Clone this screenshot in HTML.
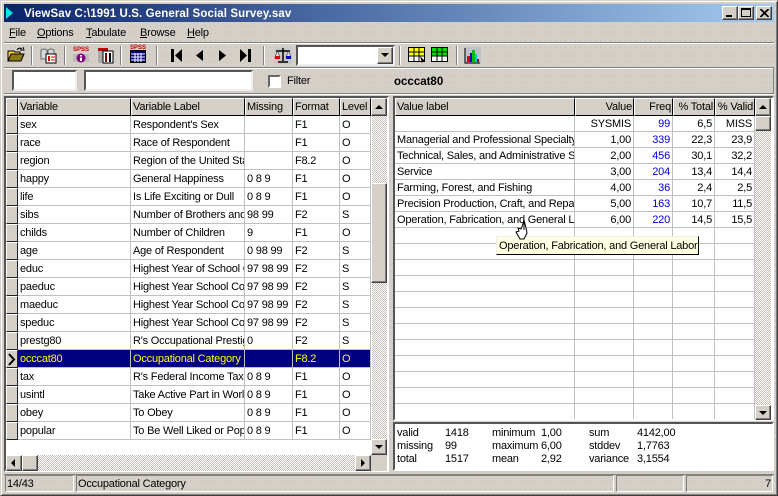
<!DOCTYPE html>
<html><head><meta charset="utf-8"><style>
*{box-sizing:border-box}
html,body{margin:0;padding:0}
body{width:778px;height:496px;overflow:hidden;position:relative;background-color:#d4d0c8;background-image:radial-gradient(circle,#e3c9bd 0.6px,transparent 0.8px),radial-gradient(circle,#bdbdc4 0.6px,transparent 0.8px);background-size:7px 5px,5px 7px;background-position:0 0,3px 2px;font-family:"Liberation Sans",sans-serif;font-size:11px;letter-spacing:-.2px;color:#000}
.a{position:absolute}
.t{position:absolute;white-space:nowrap;line-height:16px}
.r{position:absolute;background:#d4d0c8;border:1px solid;border-color:#fff #404040 #404040 #fff;box-shadow:inset -1px -1px 0 #808080}
.s{position:absolute;background:#fff;border:2px solid;border-color:#555 #eee #eee #555}
.sep{position:absolute;top:46px;width:2px;height:19px;border-left:1px solid #808080;border-right:1px solid #fff}
.chk{position:absolute;left:372px;width:15px;background:repeating-conic-gradient(#fff 0 25%,#c4c0b8 0 50%) 0 0/2px 2px}
table{position:absolute;border-collapse:separate;border-spacing:0;table-layout:fixed;background:#fff}
td{padding:1px 0 0 2px;overflow:hidden;white-space:nowrap;border-right:1px solid #c0c0c0;border-bottom:1px solid #c0c0c0;background:#fff}
.l td{height:18px}
.v td{height:16px}
.v td.n{text-align:right;padding:1px 2px 0 0}
.b{color:#0000d8}
td.i{padding:0;background:#d4d0c8;border:1px solid;border-color:#fff #202020 #202020 #fff}
tr.h td{background:#000080;color:#ff0}
tr.h td.i{background:#d4d0c8;color:#000}
.hd{position:absolute;top:98px;height:18px;background:#d4d0c8;border:1px solid;border-color:#fff #000 #000 #fff;line-height:17px;padding:0 1px;white-space:nowrap;overflow:hidden}
.arr{position:absolute;width:0;height:0;border-style:solid;border-color:transparent}
u{text-decoration:underline}
</style></head><body>
<!-- window frame -->
<div class="a" style="left:0;top:0;width:778px;height:496px;border:1px solid;border-color:#d4d0c8 #404040 #404040 #d4d0c8;box-shadow:inset 1px 1px 0 #fff,inset -1px -1px 0 #808080"></div>
<!-- title -->
<div class="a" style="left:4px;top:4px;width:770px;height:18px;background:linear-gradient(90deg,#0a246a,#a6caf0)"></div>
<div class="arr" style="left:6px;top:7px;border-width:6.5px 0 6.5px 7px;border-left-color:#00e8e8"></div>
<div class="t" style="left:24px;top:6px;color:#fff;font-weight:bold;font-size:11.5px;letter-spacing:.11px">ViewSav C:\1991 U.S. General Social Survey.sav</div>
<div class="r" style="left:722px;top:6px;width:16px;height:14px"><div class="a" style="left:3px;top:8px;width:6px;height:2px;background:#000"></div></div>
<div class="r" style="left:738px;top:6px;width:16px;height:14px"><div class="a" style="left:2px;top:1px;width:10px;height:9px;border:1px solid #000;border-top-width:2px"></div></div>
<div class="r" style="left:756px;top:6px;width:16px;height:14px"><svg class="a" style="left:3px;top:2px" width="9" height="8"><path d="M0 0L8 8M1 0L9 8M8 0L0 8M9 0L1 8" stroke="#000"/></svg></div>
<!-- menu -->
<div class="t" style="left:9px;top:25px"><u>F</u>ile</div>
<div class="t" style="left:37px;top:25px"><u>O</u>ptions</div>
<div class="t" style="left:86px;top:25px"><u>T</u>abulate</div>
<div class="t" style="left:140px;top:25px"><u>B</u>rowse</div>
<div class="t" style="left:187px;top:25px"><u>H</u>elp</div>
<div class="a" style="left:4px;top:42px;width:770px;height:2px;border-top:1px solid #808080;border-bottom:1px solid #fff"></div>
<!-- toolbar -->
<svg class="a" style="left:7px;top:46px" width="18" height="17"><path d="M1 5h6l1 1h5v3H4L1 15z" fill="#ffd24a" stroke="#000"/><path d="M1 15L4 8h13l-3 7z" fill="#8a7a10" stroke="#000"/><path d="M10 4q2-3 5-1" fill="none" stroke="#000"/><path d="M13 4h4l-1-3" fill="none" stroke="#000"/></svg>
<div class="sep" style="left:31px"></div>
<svg class="a" style="left:40px;top:47px" width="17" height="17"><path d="M1 3q3-2 6 0v9H1zM8 3q3-2 6 0v4H8z" fill="#d8d8d8" stroke="#666"/><rect x="6" y="7" width="10" height="9" fill="#fff" stroke="#000"/><rect x="8" y="9" width="2" height="5" fill="#e00000"/><path d="M11 10h4M11 13h4" stroke="#e00000"/></svg>
<div class="sep" style="left:64px"></div>
<div class="a" style="left:73px;top:54px;width:16px;height:8px;background:#bbb"></div>
<div class="t" style="left:73px;top:47px;font-size:6px;color:#c00000;line-height:7px;font-weight:bold;letter-spacing:0">SPSS</div>
<svg class="a" style="left:75px;top:53px" width="12" height="10"><circle cx="6" cy="5" r="4.5" fill="#800080"/><rect x="5" y="2" width="2" height="1.5" fill="#fff"/><rect x="5" y="4.5" width="2" height="3.5" fill="#fff"/></svg>
<svg class="a" style="left:97px;top:47px" width="17" height="17"><rect x="1" y="4" width="15" height="12" fill="#aaa"/><rect x="1" y="1" width="10" height="3" fill="#c00000"/><rect x="6" y="4" width="10" height="12" fill="#fff" stroke="#000"/><rect x="8" y="6" width="2" height="9" fill="#800000"/><rect x="12" y="6" width="2" height="9" fill="#000"/></svg>
<div class="sep" style="left:120px"></div>
<div class="t" style="left:130px;top:45px;font-size:6px;color:#c00000;line-height:7px;font-weight:bold;letter-spacing:0">SPSS</div>
<svg class="a" style="left:130px;top:50px" width="16" height="13"><rect x=".5" y=".5" width="15" height="12" fill="#000080" stroke="#000"/><path d="M1 4h14M1 7h14M1 10h14M5 3v9M8 3v9M11 3v9" stroke="#fff"/></svg>
<div class="sep" style="left:156px"></div>
<svg class="a" style="left:170px;top:48px" width="82" height="15" fill="#000"><rect x="1" y="1" width="3" height="13"/><path d="M5 7.5L12 1v13zM26 7.5L33 2v11zM49 2l7 5.5L49 13zM70 1l7 6.5L70 14z"/><rect x="78" y="1" width="3" height="13"/></svg>
<div class="sep" style="left:263px"></div>
<svg class="a" style="left:274px;top:47px" width="18" height="17"><rect x="0" y="0" width="18" height="17" fill="#c8c8c8"/><path d="M9 1v13M4 15h10M2 4h14" stroke="#000" stroke-width="1.5" fill="none"/><path d="M1 10L3.500 4L6 10zM12 10l2.500-6L17 10z" fill="#ddd" stroke="#444" stroke-width=".6"/><rect x="1" y="9" width="5" height="3" fill="#e00000"/><rect x="12" y="9" width="5" height="3" fill="#0000d0"/></svg>
<div class="s" style="left:296px;top:45px;width:99px;height:21px"></div>
<div class="r" style="left:377px;top:47px;width:16px;height:17px"><div class="arr" style="left:3px;top:5px;border-width:4px 4px 0;border-top-color:#000"></div></div>
<div class="sep" style="left:399px"></div>
<svg class="a" style="left:408px;top:47px" width="18" height="16"><rect x=".5" y=".5" width="16" height="14" fill="#fff" stroke="#000"/><rect x="1" y="1" width="15" height="8" fill="#ff0"/><path d="M1 5h15M1 9h15M6 1v14M11 1v14" stroke="#000"/><path d="M12 9l5 5-2 0-1 2z" fill="#000"/></svg>
<svg class="a" style="left:431px;top:47px" width="18" height="16"><rect x=".5" y=".5" width="16" height="14" fill="#fff" stroke="#000"/><rect x="1" y="1" width="15" height="8" fill="#00e000"/><path d="M1 5h15M1 9h15M6 1v14M11 1v14" stroke="#000"/></svg>
<div class="sep" style="left:456px"></div>
<svg class="a" style="left:464px;top:47px" width="17" height="17"><rect width="17" height="17" fill="#c0c0c8"/><rect x="3" y="9" width="3" height="6" fill="#e00000"/><rect x="6" y="6" width="2" height="9" fill="#0000d0"/><rect x="8" y="3" width="3" height="12" fill="#00c000"/><rect x="11" y="7" width="2" height="8" fill="#00c8c8"/><rect x="13" y="12" width="2" height="3" fill="#800000"/><path d="M1 1v15h15" stroke="#000" fill="none"/></svg>
<div class="a" style="left:4px;top:67px;width:770px;height:2px;border-top:1px solid #808080;border-bottom:1px solid #fff"></div>
<!-- filter panel -->
<div class="a" style="left:4px;top:67px;width:770px;height:27px;border-right:1px solid #808080;border-bottom:1px solid #808080;box-shadow:0 1px 0 #fff"></div>
<div class="s" style="left:12px;top:70px;width:65px;height:21px"></div>
<div class="s" style="left:84px;top:70px;width:169px;height:21px"></div>
<div class="s" style="left:268px;top:75px;width:13px;height:13px;border-color:#666 #fff #fff #666"></div>
<div class="t" style="left:287px;top:73px">Filter</div>
<div class="t" style="left:394px;top:74px;font-weight:bold;font-size:11.5px;letter-spacing:0">occcat80</div>
<!-- left grid -->
<div class="a" style="left:4px;top:96px;width:385px;height:376px;border:2px solid;border-color:#555 #fff #fff #555;background:#fff"></div>
<div class="hd" style="left:6px;width:12px"></div>
<div class="hd" style="left:18px;width:113px">Variable</div>
<div class="hd" style="left:131px;width:114px">Variable Label</div>
<div class="hd" style="left:245px;width:48px">Missing</div>
<div class="hd" style="left:293px;width:47px">Format</div>
<div class="hd" style="left:340px;width:31px">Level</div>
<table class="l" style="left:6px;top:116px;width:365px">
<colgroup><col style="width:12px"><col style="width:113px"><col style="width:114px"><col style="width:48px"><col style="width:47px"><col style="width:31px"></colgroup>
<tr><td class="i"></td><td>sex</td><td>Respondent's Sex</td><td></td><td>F1</td><td>O</td></tr>
<tr><td class="i"></td><td>race</td><td>Race of Respondent</td><td></td><td>F1</td><td>O</td></tr>
<tr><td class="i"></td><td>region</td><td>Region of the United States</td><td></td><td>F8.2</td><td>O</td></tr>
<tr><td class="i"></td><td>happy</td><td>General Happiness</td><td>0 8 9</td><td>F1</td><td>O</td></tr>
<tr><td class="i"></td><td>life</td><td>Is Life Exciting or Dull</td><td>0 8 9</td><td>F1</td><td>O</td></tr>
<tr><td class="i"></td><td>sibs</td><td>Number of Brothers and Sisters</td><td>98 99</td><td>F2</td><td>S</td></tr>
<tr><td class="i"></td><td>childs</td><td>Number of Children</td><td>9</td><td>F1</td><td>O</td></tr>
<tr><td class="i"></td><td>age</td><td>Age of Respondent</td><td>0 98 99</td><td>F2</td><td>S</td></tr>
<tr><td class="i"></td><td>educ</td><td>Highest Year of School Completed</td><td>97 98 99</td><td>F2</td><td>S</td></tr>
<tr><td class="i"></td><td>paeduc</td><td>Highest Year School Completed</td><td>97 98 99</td><td>F2</td><td>S</td></tr>
<tr><td class="i"></td><td>maeduc</td><td>Highest Year School Completed</td><td>97 98 99</td><td>F2</td><td>S</td></tr>
<tr><td class="i"></td><td>speduc</td><td>Highest Year School Completed</td><td>97 98 99</td><td>F2</td><td>S</td></tr>
<tr><td class="i"></td><td>prestg80</td><td>R's Occupational Prestige</td><td>0</td><td>F2</td><td>S</td></tr>
<tr class="h"><td class="i"><svg width="10" height="15" style="display:block"><path d="M2 2l5 5.500L2 13" fill="none" stroke="#000" stroke-width="2"/></svg></td><td>occcat80</td><td>Occupational Category</td><td></td><td>F8.2</td><td>O</td></tr>
<tr><td class="i"></td><td>tax</td><td>R's Federal Income Tax</td><td>0 8 9</td><td>F1</td><td>O</td></tr>
<tr><td class="i"></td><td>usintl</td><td>Take Active Part in World Affairs</td><td>0 8 9</td><td>F1</td><td>O</td></tr>
<tr><td class="i"></td><td>obey</td><td>To Obey</td><td>0 8 9</td><td>F1</td><td>O</td></tr>
<tr><td class="i"></td><td>popular</td><td>To Be Well Liked or Popular</td><td>0 8 9</td><td>F1</td><td>O</td></tr>
</table>
<!-- left vscroll -->
<div class="chk" style="top:116px;height:324px"></div>
<div class="r" style="left:371px;top:98px;width:16px;height:18px"><div class="arr" style="left:3px;top:6px;border-width:0 4px 4px;border-bottom-color:#000"></div></div>
<div class="r" style="left:371px;top:183px;width:16px;height:100px"></div>
<div class="r" style="left:371px;top:439px;width:16px;height:16px"><div class="arr" style="left:3px;top:5px;border-width:4px 4px 0;border-top-color:#000"></div></div>
<!-- left hscroll -->
<div class="chk" style="left:22px;top:455px;width:335px;height:16px"></div>
<div class="r" style="left:6px;top:455px;width:16px;height:16px"><div class="arr" style="left:4px;top:3px;border-width:4px 4px 4px 0;border-right-color:#000"></div></div>
<div class="r" style="left:22px;top:455px;width:16px;height:16px"></div>
<div class="r" style="left:355px;top:455px;width:16px;height:16px"><div class="arr" style="left:5px;top:3px;border-width:4px 0 4px 4px;border-left-color:#000"></div></div>
<div class="a" style="left:371px;top:455px;width:16px;height:16px;background:#d4d0c8"></div>
<!-- right grid -->
<div class="a" style="left:393px;top:96px;width:381px;height:325px;border:2px solid;border-color:#555 #fff #fff #555;background:#fff"></div>
<div class="hd" style="left:395px;width:180px">Value label</div>
<div class="hd" style="left:575px;width:59px;text-align:right">Value</div>
<div class="hd" style="left:634px;width:39px;text-align:right">Freq</div>
<div class="hd" style="left:673px;width:42px;text-align:right">% Total</div>
<div class="hd" style="left:715px;width:40px;text-align:right">% Valid</div>
<table class="v" style="left:395px;top:116px;width:360px">
<colgroup><col style="width:180px"><col style="width:59px"><col style="width:39px"><col style="width:42px"><col style="width:40px"></colgroup>
<tr><td></td><td class="n">SYSMIS</td><td class="n b">99</td><td class="n">6,5</td><td class="n">MISS</td></tr>
<tr><td>Managerial and Professional Specialty</td><td class="n">1,00</td><td class="n b">339</td><td class="n">22,3</td><td class="n">23,9</td></tr>
<tr><td>Technical, Sales, and Administrative Support</td><td class="n">2,00</td><td class="n b">456</td><td class="n">30,1</td><td class="n">32,2</td></tr>
<tr><td>Service</td><td class="n">3,00</td><td class="n b">204</td><td class="n">13,4</td><td class="n">14,4</td></tr>
<tr><td>Farming, Forest, and Fishing</td><td class="n">4,00</td><td class="n b">36</td><td class="n">2,4</td><td class="n">2,5</td></tr>
<tr><td>Precision Production, Craft, and Repair</td><td class="n">5,00</td><td class="n b">163</td><td class="n">10,7</td><td class="n">11,5</td></tr>
<tr><td>Operation, Fabrication, and General Labor</td><td class="n">6,00</td><td class="n b">220</td><td class="n">14,5</td><td class="n">15,5</td></tr>
<tr><td></td><td></td><td></td><td></td><td></td></tr><tr><td></td><td></td><td></td><td></td><td></td></tr><tr><td></td><td></td><td></td><td></td><td></td></tr><tr><td></td><td></td><td></td><td></td><td></td></tr><tr><td></td><td></td><td></td><td></td><td></td></tr><tr><td></td><td></td><td></td><td></td><td></td></tr><tr><td></td><td></td><td></td><td></td><td></td></tr><tr><td></td><td></td><td></td><td></td><td></td></tr><tr><td></td><td></td><td></td><td></td><td></td></tr><tr><td></td><td></td><td></td><td></td><td></td></tr><tr><td></td><td></td><td></td><td></td><td></td></tr><tr style="height:15px"><td style="height:15px;border-bottom:0"></td><td style="height:15px;border-bottom:0"></td><td style="height:15px;border-bottom:0"></td><td style="height:15px;border-bottom:0"></td><td style="height:15px;border-bottom:0"></td></tr>
</table>
<div class="chk" style="left:755px;top:116px;height:304px;width:16px"></div>
<div class="r" style="left:755px;top:98px;width:16px;height:18px"><div class="arr" style="left:3px;top:6px;border-width:0 4px 4px;border-bottom-color:#000"></div></div>
<div class="r" style="left:755px;top:116px;width:16px;height:15px"></div>
<div class="r" style="left:755px;top:405px;width:16px;height:15px"><div class="arr" style="left:3px;top:5px;border-width:4px 4px 0;border-top-color:#000"></div></div>
<!-- tooltip -->
<div class="a" style="left:496px;top:236px;width:203px;height:19px;background:#ffffe1;border:1px solid;border-color:#eee #000 #000 #eee;padding-left:2px;line-height:18px;white-space:nowrap;overflow:hidden">Operation, Fabrication, and General Labor</div>
<!-- cursor -->
<svg class="a" style="left:515px;top:219px" width="14" height="21"><path d="M9 1l2 8 1 5-3 6H5L1 13l3-1-1-3 3 1 1-2z" fill="#fff" stroke="#000"/><path d="M9 3v8" stroke="#000"/></svg>
<!-- stats -->
<div class="a" style="left:393px;top:422px;width:381px;height:49px;border:2px solid;border-color:#555 #fff #fff #555;background:#fff"></div>
<div class="t" style="left:397px;top:425px">valid</div><div class="t" style="left:445px;top:425px">1418</div><div class="t" style="left:492px;top:425px">minimum</div><div class="t" style="left:541px;top:425px">1,00</div><div class="t" style="left:589px;top:425px">sum</div><div class="t" style="left:637px;top:425px">4142,00</div>
<div class="t" style="left:397px;top:438px">missing</div><div class="t" style="left:445px;top:438px">99</div><div class="t" style="left:492px;top:438px">maximum</div><div class="t" style="left:541px;top:438px">6,00</div><div class="t" style="left:589px;top:438px">stddev</div><div class="t" style="left:637px;top:438px">1,7763</div>
<div class="t" style="left:397px;top:451px">total</div><div class="t" style="left:445px;top:451px">1517</div><div class="t" style="left:492px;top:451px">mean</div><div class="t" style="left:541px;top:451px">2,92</div><div class="t" style="left:589px;top:451px">variance</div><div class="t" style="left:637px;top:451px">3,1554</div>
<!-- status -->
<div class="a" style="left:4px;top:474px;width:770px;height:1px;background:#808080"></div>
<div class="a" style="left:5px;top:475px;width:69px;height:17px;border:1px solid;border-color:#808080 #fff #fff #808080;padding-left:1px;line-height:16px">14/43</div>
<div class="a" style="left:76px;top:475px;width:538px;height:17px;border:1px solid;border-color:#808080 #fff #fff #808080;padding-left:1px;line-height:16px">Occupational Category</div>
<div class="a" style="left:616px;top:475px;width:68px;height:17px;border:1px solid;border-color:#808080 #fff #fff #808080"></div>
<div class="a" style="left:686px;top:475px;width:87px;height:17px;border:1px solid;border-color:#808080 #fff #fff #808080;text-align:right;padding-right:1px;line-height:16px">7</div>
</body></html>
